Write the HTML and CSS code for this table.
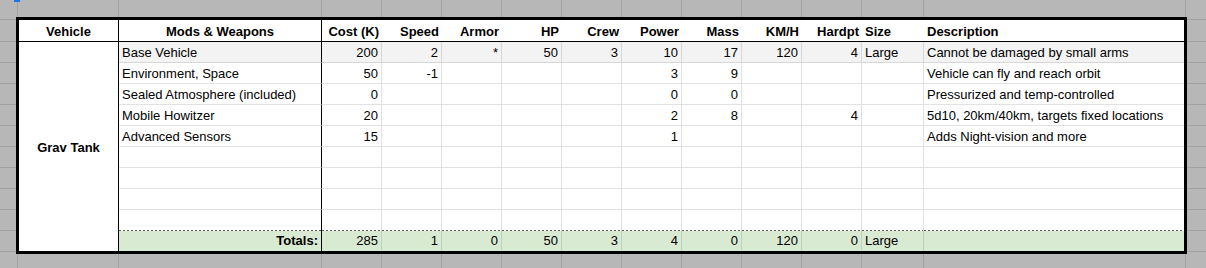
FILE: index.html
```html
<!DOCTYPE html>
<html>
<head>
<meta charset="utf-8">
<link rel="stylesheet" href="styles.css">
</head>
<body>
<div class="handle"></div>
<div class="sheet">
  <div class="strip-h">
    <div class="gc w18"></div><div class="gc w101"></div><div class="gc w203"></div>
    <div class="gc w60"></div><div class="gc w60"></div><div class="gc w60"></div><div class="gc w60"></div><div class="gc w60"></div>
    <div class="gc w60"></div><div class="gc w60"></div><div class="gc w60"></div><div class="gc w60"></div>
    <div class="gc w62"></div><div class="gc w262"></div><div class="gc w20 last"></div>
  </div>

  <div class="strip-v">
    <div class="gr h3"></div><div class="gr h22"></div>
    <div class="gr h21"></div><div class="gr h21"></div><div class="gr h21"></div><div class="gr h21"></div><div class="gr h21"></div>
    <div class="gr h21"></div><div class="gr h21"></div><div class="gr h21"></div><div class="gr h21"></div><div class="gr h21"></div>
    <div class="gr h2 last"></div>
  </div>

  <div class="tbl">
    <!-- header -->
    <div class="c h vb ctr b">Vehicle</div>
    <div class="c h vb ctr b">Mods &amp; Weapons</div>
    <div class="c h r b">Cost (K)</div>
    <div class="c h r b">Speed</div>
    <div class="c h r b">Armor</div>
    <div class="c h r b">HP</div>
    <div class="c h r b">Crew</div>
    <div class="c h r b">Power</div>
    <div class="c h r b">Mass</div>
    <div class="c h r b">KM/H</div>
    <div class="c h r b">Hardpt</div>
    <div class="c h b">Size</div>
    <div class="c h b">Description</div>

    <div class="veh b">Grav Tank</div>

    <!-- row 1 -->
    <div class="c d vb alt">Base Vehicle</div>
    <div class="c d g r alt">200</div>
    <div class="c d g r alt">2</div>
    <div class="c d g r alt">*</div>
    <div class="c d g r alt">50</div>
    <div class="c d g r alt">3</div>
    <div class="c d g r alt">10</div>
    <div class="c d g r alt">17</div>
    <div class="c d g r alt">120</div>
    <div class="c d g r alt">4</div>
    <div class="c d g alt">Large</div>
    <div class="c d alt">Cannot be damaged by small arms</div>

    <!-- row 2 -->
    <div class="c d vb">Environment, Space</div>
    <div class="c d g r">50</div>
    <div class="c d g r">-1</div>
    <div class="c d g r"></div>
    <div class="c d g r"></div>
    <div class="c d g r"></div>
    <div class="c d g r">3</div>
    <div class="c d g r">9</div>
    <div class="c d g r"></div>
    <div class="c d g r"></div>
    <div class="c d g"></div>
    <div class="c d">Vehicle can fly and reach orbit</div>

    <!-- row 3 -->
    <div class="c d vb">Sealed Atmosphere (included)</div>
    <div class="c d g r">0</div>
    <div class="c d g r"></div>
    <div class="c d g r"></div>
    <div class="c d g r"></div>
    <div class="c d g r"></div>
    <div class="c d g r">0</div>
    <div class="c d g r">0</div>
    <div class="c d g r"></div>
    <div class="c d g r"></div>
    <div class="c d g"></div>
    <div class="c d">Pressurized and temp-controlled</div>

    <!-- row 4 -->
    <div class="c d vb">Mobile Howitzer</div>
    <div class="c d g r">20</div>
    <div class="c d g r"></div>
    <div class="c d g r"></div>
    <div class="c d g r"></div>
    <div class="c d g r"></div>
    <div class="c d g r">2</div>
    <div class="c d g r">8</div>
    <div class="c d g r"></div>
    <div class="c d g r">4</div>
    <div class="c d g"></div>
    <div class="c d">5d10, 20km/40km, targets fixed locations</div>

    <!-- row 5 -->
    <div class="c d vb">Advanced Sensors</div>
    <div class="c d g r">15</div>
    <div class="c d g r"></div>
    <div class="c d g r"></div>
    <div class="c d g r"></div>
    <div class="c d g r"></div>
    <div class="c d g r">1</div>
    <div class="c d g r"></div>
    <div class="c d g r"></div>
    <div class="c d g r"></div>
    <div class="c d g"></div>
    <div class="c d">Adds Night-vision and more</div>

    <!-- row 6 -->
    <div class="c d vb"></div>
    <div class="c d g"></div><div class="c d g"></div><div class="c d g"></div><div class="c d g"></div><div class="c d g"></div>
    <div class="c d g"></div><div class="c d g"></div><div class="c d g"></div><div class="c d g"></div><div class="c d g"></div>
    <div class="c d"></div>

    <!-- row 7 -->
    <div class="c d vb"></div>
    <div class="c d g"></div><div class="c d g"></div><div class="c d g"></div><div class="c d g"></div><div class="c d g"></div>
    <div class="c d g"></div><div class="c d g"></div><div class="c d g"></div><div class="c d g"></div><div class="c d g"></div>
    <div class="c d"></div>

    <!-- row 8 -->
    <div class="c d vb"></div>
    <div class="c d g"></div><div class="c d g"></div><div class="c d g"></div><div class="c d g"></div><div class="c d g"></div>
    <div class="c d g"></div><div class="c d g"></div><div class="c d g"></div><div class="c d g"></div><div class="c d g"></div>
    <div class="c d"></div>

    <!-- row 9 (dashed bottom) -->
    <div class="c d dash vb"></div>
    <div class="c d dash g"></div><div class="c d dash g"></div><div class="c d dash g"></div><div class="c d dash g"></div><div class="c d dash g"></div>
    <div class="c d dash g"></div><div class="c d dash g"></div><div class="c d dash g"></div><div class="c d dash g"></div><div class="c d dash g"></div>
    <div class="c d dash"></div>

    <!-- totals -->
    <div class="c tot vb r b">Totals:</div>
    <div class="c tot g r">285</div>
    <div class="c tot g r">1</div>
    <div class="c tot g r">0</div>
    <div class="c tot g r">50</div>
    <div class="c tot g r">3</div>
    <div class="c tot g r">4</div>
    <div class="c tot g r">0</div>
    <div class="c tot g r">120</div>
    <div class="c tot g r">0</div>
    <div class="c tot g">Large</div>
    <div class="c tot"></div>
  </div>

  <div class="strip-v">
    <div class="gr h3"></div><div class="gr h22"></div>
    <div class="gr h21"></div><div class="gr h21"></div><div class="gr h21"></div><div class="gr h21"></div><div class="gr h21"></div>
    <div class="gr h21"></div><div class="gr h21"></div><div class="gr h21"></div><div class="gr h21"></div><div class="gr h21"></div>
    <div class="gr h2 last"></div>
  </div>

  <div class="strip-h">
    <div class="gc w18"></div><div class="gc w101"></div><div class="gc w203"></div>
    <div class="gc w60"></div><div class="gc w60"></div><div class="gc w60"></div><div class="gc w60"></div><div class="gc w60"></div>
    <div class="gc w60"></div><div class="gc w60"></div><div class="gc w60"></div><div class="gc w60"></div>
    <div class="gc w62"></div><div class="gc w262"></div><div class="gc w20 last"></div>
  </div>
</div>
</body>
</html>
```

FILE: styles.css
```css
* { box-sizing: border-box; }

html, body {
  margin: 0;
  padding: 0;
}

body {
  position: relative;
  width: 1206px;
  height: 268px;
  overflow: hidden;
  background: #b7b7b7;
  font-family: "Liberation Sans", Arial, sans-serif;
  font-size: 13px;
  color: #000;
}

.handle {
  position: absolute;
  left: 14px;
  top: 0;
  width: 6px;
  height: 2px;
  background: #1a73e8;
}

.sheet {
  display: grid;
  grid-template-columns: 16px 1171px 19px;
  grid-template-rows: 17px 237px 14px;
}

/* gray surrounding sheet grid */
.strip-h {
  grid-column: 1 / -1;
  display: flex;
}
.gc {
  height: 100%;
  border-right: 1px solid rgba(0, 0, 0, 0.114);
}
.gc.last { border-right: none; }
.w18 { width: 18px; }
.w101 { width: 101px; }
.w203 { width: 203px; }
.w60 { width: 60px; }
.w62 { width: 62px; }
.w262 { width: 262px; }
.w20 { width: 20px; }

.strip-v {
  display: flex;
  flex-direction: column;
}
.gr {
  width: 100%;
  border-bottom: 1px solid rgba(0, 0, 0, 0.114);
}
.gr.last { border-bottom: none; }
.h2 { height: 2px; }
.h3 { height: 3px; }
.h21 { height: 21px; }
.h22 { height: 22px; }

/* the table */
.tbl {
  border: 3px solid #000;
  background: #fff;
  display: grid;
  grid-template-columns: 100px 203px repeat(9, 60px) 62px 260px;
  grid-template-rows: 22px repeat(9, 21px) 20px;
}

.c {
  padding: 2px 3px 0;
  line-height: 18px;
  white-space: nowrap;
  min-width: 0;
}
.r { text-align: right; }
.ctr { text-align: center; }
.b { font-weight: bold; }

.h {
  padding-top: 3px;
  border-bottom: 1px solid #000;
}
.vb { border-right: 1px solid #000; }

.d { border-bottom: 1px solid rgba(0, 0, 0, 0.114); }
.g { border-right: 1px solid rgba(0, 0, 0, 0.114); }
.alt { background: #f3f3f3; }

.d.dash {
  border-bottom: none;
  background-image: repeating-linear-gradient(90deg, #5a5a5a 0 2px, transparent 2px 4px);
  background-size: 100% 1px;
  background-position: left bottom;
  background-repeat: no-repeat;
}

.tot {
  padding-top: 1px;
  background: #d9ead3;
}

.veh {
  grid-column: 1;
  grid-row: 2 / span 10;
  border-right: 1px solid #000;
  display: flex;
  align-items: center;
  justify-content: center;
  padding-top: 2px;
  line-height: 18px;
}
```
